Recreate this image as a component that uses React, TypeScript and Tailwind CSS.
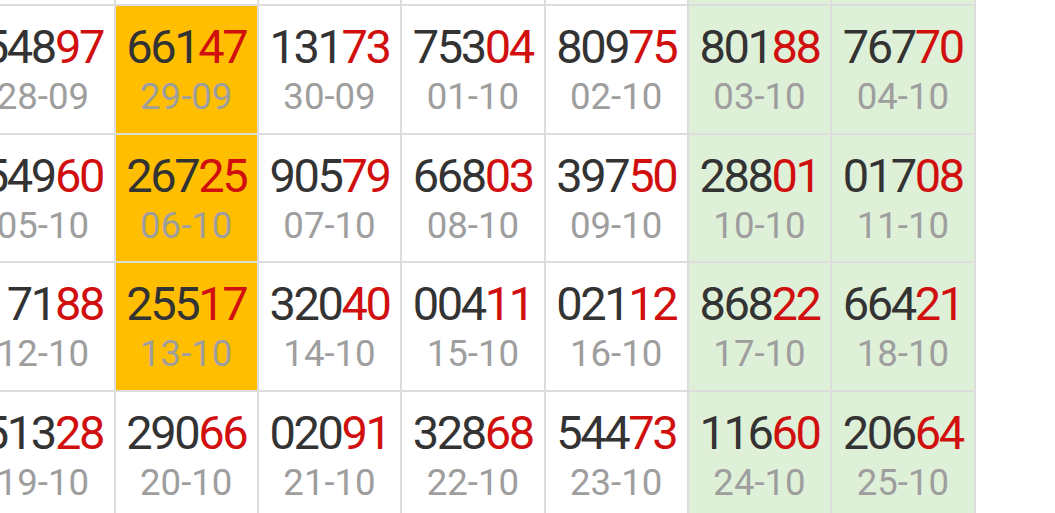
import clsx from 'clsx'

interface Draw {
  num: string
  date: string
  hot?: boolean
}

// week rows, Monday first; the first row sits mostly above the viewport
const weeks: Draw[][] = [
  [
    { num: '31245', date: '21-09' },
    { num: '08912', date: '22-09' },
    { num: '47730', date: '23-09' },
    { num: '15586', date: '24-09' },
    { num: '62214', date: '25-09' },
    { num: '93057', date: '26-09' },
    { num: '40369', date: '27-09' },
  ],
  [
    { num: '54897', date: '28-09' },
    { num: '66147', date: '29-09', hot: true },
    { num: '13173', date: '30-09' },
    { num: '75304', date: '01-10' },
    { num: '80975', date: '02-10' },
    { num: '80188', date: '03-10' },
    { num: '76770', date: '04-10' },
  ],
  [
    { num: '54960', date: '05-10' },
    { num: '26725', date: '06-10', hot: true },
    { num: '90579', date: '07-10' },
    { num: '66803', date: '08-10' },
    { num: '39750', date: '09-10' },
    { num: '28801', date: '10-10' },
    { num: '01708', date: '11-10' },
  ],
  [
    { num: '17188', date: '12-10' },
    { num: '25517', date: '13-10', hot: true },
    { num: '32040', date: '14-10' },
    { num: '00411', date: '15-10' },
    { num: '02112', date: '16-10' },
    { num: '86822', date: '17-10' },
    { num: '66421', date: '18-10' },
  ],
  [
    { num: '51328', date: '19-10' },
    { num: '29066', date: '20-10' },
    { num: '02091', date: '21-10' },
    { num: '32868', date: '22-10' },
    { num: '54473', date: '23-10' },
    { num: '11660', date: '24-10' },
    { num: '20664', date: '25-10' },
  ],
]

function Cell({ draw, weekend }: { draw: Draw; weekend: boolean }) {
  return (
    <div
      className={clsx(
        'flex flex-col items-center justify-center border-r-2 border-b-2 border-[#dddddd]',
        draw.hot ? 'bg-[#ffbf00]' : weekend ? 'bg-[#dff0d8]' : 'bg-white',
      )}
    >
      <div className="text-[47px] leading-[56px] tracking-[-2.4px] text-[#333333]">
        {draw.num.slice(0, 3)}
        <span className="text-[#d10f0f]">{draw.num.slice(3)}</span>
      </div>
      <div className="text-[36.6px] leading-[44px] text-[#9e9e9e]">{draw.date}</div>
    </div>
  )
}

export default function App() {
  return (
    <div className="w-[1055px] h-[513px] overflow-hidden bg-white font-['Roboto',sans-serif]">
      <div className="grid grid-cols-[repeat(7,143.33px)] auto-rows-[128.5px] ml-[-27.8px] mt-[-122.5px] w-max">
        {weeks.map((week, r) =>
          week.map((draw, c) => <Cell key={`${r}-${c}`} draw={draw} weekend={c >= 5} />),
        )}
      </div>
    </div>
  )
}
